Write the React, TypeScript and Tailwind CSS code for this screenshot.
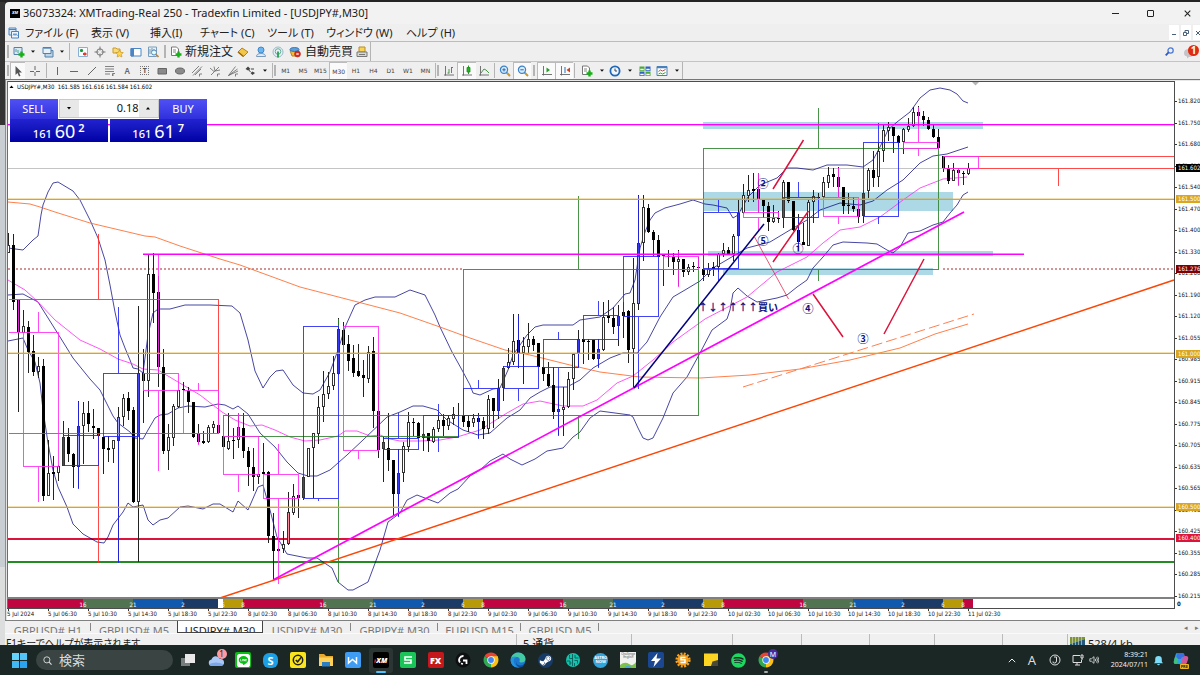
import React from "react";
import { FaLine, FaSpotify, FaSteamSymbol } from "react-icons/fa";

type Kind = "b" | "w" | "u" | "r";
type Candle = [number, number, number, number, Kind];

/* high, body top, body bottom, low, fill */
const candles: Candle[] = [
  [233,245,253,253,"w"],[234,245,302,310,"b"],[300,300,332,412,"b"],[310,326,333,333,"w"],[321,327,352,373,"b"],
  [335,351,372,376,"b"],[357,366,372,378,"w"],[359,366,496,501,"b"],[440,473,496,496,"w"],[456,472,474,500,"b"],
  [465,466,473,481,"w"],[421,437,466,466,"u"],[428,437,454,462,"b"],[453,454,467,488,"b"],[401,426,467,488,"u"],
  [402,413,426,464,"w"],[401,413,424,432,"b"],[409,426,428,439,"b"],[428,428,436,437,"b"],[437,437,449,474,"b"],
  [436,448,450,462,"w"],[440,440,449,463,"w"],[407,417,441,562,"u"],[394,398,417,426,"w"],[392,398,411,420,"b"],
  [407,410,502,503,"b"],[306,373,502,562,"w"],[349,373,381,423,"b"],[254,274,381,397,"w"],[253,274,293,323,"b"],
  [276,292,367,387,"b"],[349,367,451,454,"b"],[424,437,451,470,"w"],[404,406,438,446,"w"],[390,390,407,408,"w"],
  [382,389,390,391,"b"],[387,391,402,413,"b"],[402,402,437,438,"b"],[424,433,442,444,"b"],[431,441,443,444,"b"],
  [425,427,442,443,"w"],[421,424,428,433,"w"],[425,425,433,434,"b"],[436,436,447,447,"b"],[413,441,449,450,"w"],
  [428,440,441,459,"b"],[413,427,440,448,"w"],[413,428,451,458,"b"],[447,451,467,486,"b"],[448,467,477,491,"b"],
  [474,474,477,484,"w"],[443,472,474,474,"w"],[471,472,536,543,"b"],[513,536,551,580,"b"],[548,549,551,552,"w"],
  [531,544,549,553,"w"],[492,512,544,545,"r"],[484,496,513,515,"w"],[495,495,498,518,"b"],[476,477,498,500,"u"],
  [448,448,477,477,"w"],[433,433,448,498,"w"],[396,407,434,444,"w"],[371,394,407,422,"w"],[372,386,394,399,"w"],
  [356,373,386,390,"w"],[318,329,374,375,"u"],[322,330,345,352,"b"],[335,344,361,371,"b"],[345,358,373,377,"b"],
  [344,371,376,377,"b"],[360,375,378,397,"b"],[346,352,379,383,"w"],[337,351,411,428,"b"],[390,411,450,458,"b"],
  [437,442,449,482,"w"],[413,448,460,471,"b"],[460,460,494,516,"b"],[449,473,494,516,"u"],[442,446,473,482,"w"],
  [412,422,447,452,"w"],[418,422,423,436,"b"],[422,423,438,438,"b"],[433,434,438,451,"w"],[433,433,441,452,"b"],
  [427,429,442,443,"w"],[413,420,429,432,"w"],[414,420,426,436,"b"],[415,418,426,430,"w"],[407,414,419,425,"w"],
  [403,415,416,437,"b"],[415,415,422,427,"b"],[416,421,427,432,"b"],[414,418,423,427,"w"],[413,418,422,438,"b"],
  [417,421,429,439,"b"],[395,399,429,434,"w"],[398,398,411,428,"b"],[379,388,411,419,"u"],[366,368,388,401,"w"],
  [348,362,368,369,"w"],[314,341,362,365,"w"],[314,340,353,368,"b"],[337,346,353,384,"w"],[323,339,347,354,"w"],
  [336,339,345,351,"b"],[343,343,367,367,"b"],[367,367,374,381,"b"],[362,374,386,387,"b"],[367,385,412,419,"b"],
  [387,409,412,435,"w"],[387,407,410,436,"w"],[372,379,407,408,"w"],[354,354,379,390,"w"],[330,339,354,367,"u"],
  [339,339,342,364,"b"],[339,341,342,360,"w"],[340,340,359,360,"b"],[339,349,359,367,"u"],[302,317,350,351,"w"],
  [300,316,318,323,"b"],[307,318,327,334,"b"],[305,316,326,346,"u"],[302,312,316,338,"b"],[310,311,350,363,"b"],
  [258,303,349,388,"w"],[195,243,304,310,"u"],[195,207,243,261,"w"],[204,208,232,233,"b"],[230,232,240,256,"b"],
  [235,240,257,257,"b"],[255,255,256,286,"b"],[250,256,257,267,"b"],[253,257,262,275,"b"],[250,259,262,286,"w"],
  [259,259,272,277,"b"],[264,267,272,275,"w"],[262,266,267,272,"w"],[257,267,268,268,"b"],[264,269,275,281,"b"],
  [263,269,275,277,"w"],[262,267,269,276,"w"],[253,254,267,272,"w"],[243,250,254,257,"w"],[247,250,254,255,"b"],
  [234,236,254,261,"w"],[199,213,236,237,"u"],[184,195,213,214,"w"],[175,190,196,202,"w"],[173,189,191,202,"b"],
  [173,189,199,213,"b"],[199,199,206,218,"b"],[202,206,222,231,"b"],[205,218,222,223,"w"],[211,218,219,223,"b"],
  [180,182,218,228,"w"],[182,182,201,203,"b"],[201,201,230,231,"b"],[214,230,242,248,"b"],[223,242,245,245,"b"],
  [200,202,246,246,"w"],[190,196,202,223,"w"],[193,197,198,200,"b"],[177,182,197,198,"w"],[167,175,183,188,"w"],
  [168,174,177,187,"b"],[167,177,187,197,"b"],[187,187,206,214,"b"],[193,205,206,214,"b"],[197,206,209,212,"b"],
  [203,209,217,223,"b"],[190,193,216,223,"u"],[168,170,191,198,"w"],[151,170,178,187,"b"],[142,151,177,187,"w"],
  [125,130,151,162,"w"],[122,127,131,141,"w"],[127,127,136,153,"b"],[135,136,143,147,"b"],[128,129,142,154,"w"],
  [118,126,130,132,"w"],[107,112,126,127,"w"],[106,112,116,126,"b"],[111,116,120,126,"b"],[117,120,129,130,"b"],
  [125,129,137,138,"b"],[129,137,148,149,"b"],[156,156,168,172,"b"],[165,168,181,184,"b"],[163,170,181,181,"w"],
  [168,170,173,185,"b"],[171,173,174,185,"b"],[163,168,174,175,"w"],
];

const BLUE = "#2222f5";
const PINK = "#ff2cf5";
const GREEN = "#2c7f2c";
const RED = "#ff2a2a";

/* left, right, top, bottom, upper wick, lower wick, colour; the wick sits mid-way */
const boxes: [number, number, number, number, number, number, string][] = [
  [23,58,332,466,311,501,PINK],[63,98,435,465,401,488,BLUE],[103,138,373,436,306,562,BLUE],
  [143,178,373,390,254,470,PINK],[183,218,390,433,382,444,PINK],[223,258,436,474,412,491,PINK],
  [263,298,474,498,443,583,PINK],[303,338,326,498,326,500,BLUE],[343,378,326,450,326,458,PINK],
  [383,418,438,449,412,516,BLUE],[423,458,415,437,403,451,BLUE],[463,498,388,415,379,438,BLUE],
  [503,538,366,388,314,400,BLUE],[543,578,339,367,331,435,BLUE],[583,618,315,339,300,367,BLUE],
  [623,658,256,316,195,388,BLUE],[663,698,256,269,250,286,PINK],[703,738,212,268,198,280,BLUE],
  [743,778,212,217,172,231,PINK],[783,818,197,217,181,250,BLUE],[823,858,197,216,167,223,PINK],
  [863,898,142,216,122,223,BLUE],[903,938,142,148,106,155,PINK],[943,978,156,168,156,185,PINK],
];

const upperBand =
  "8,248 23,250 33,240 38,236 41,215 43,205 48,192 53,183 58,182 73,191 80,200 90,220 98,238 105,260 110,285 115,312 120,335 125,348 130,360 133,368 138,369 143,373 148,335 153,313 158,309 170,309 185,305 210,305 232,306 240,313 248,340 255,371 263,388 270,377 276,371 283,370 293,385 303,393 313,394 320,390 330,372 338,350 346,325 355,305 365,300 375,297 395,297 410,290 425,295 435,315 440,327 452,352 462,370 470,385 473,393 480,395 493,389 500,388 508,370 513,355 520,345 527,335 535,327 543,325 573,325 580,320 600,317 613,308 625,294 630,293 635,280 640,248 645,232 650,220 655,213 665,208 680,204 693,200 705,204 713,205 727,208 733,218 738,215 748,197 760,185 777,178 787,168 797,168 813,170 827,165 847,165 863,167 873,160 880,147 888,130 897,122 910,112 920,98 930,90 940,88 950,90 957,94 963,101 968,103";
const middleBand =
  "8,295 23,294 38,302 60,337 73,358 90,379 100,390 113,416 118,423 130,432 135,438 143,439 148,430 155,418 160,415 168,414 178,408 188,406 205,407 218,404 225,405 233,409 238,406 248,414 260,433 275,447 287,462 298,473 308,476 317,476 330,470 347,455 363,440 387,417 400,412 413,406 423,406 437,410 447,420 463,430 478,435 490,433 507,418 520,410 530,398 540,392 550,387 567,387 580,380 593,368 610,358 623,353 637,353 647,342 660,317 673,297 685,290 700,281 713,268 730,258 747,248 770,242 790,230 807,220 820,210 840,203 860,205 873,201 887,190 903,180 920,163 933,156 947,154 968,147";
const lowerBand =
  "8,341 23,338 28,350 35,362 40,383 43,410 48,443 53,470 58,487 67,507 73,524 83,534 97,542 104,543 108,537 113,525 123,512 128,503 133,507 143,505 148,520 153,525 160,520 168,518 180,507 188,506 203,509 213,504 220,504 233,512 238,501 248,510 258,487 263,485 270,510 277,537 287,554 307,558 317,558 332,568 338,582 348,590 353,590 368,582 380,550 388,522 400,513 407,500 417,495 438,503 450,493 458,489 470,476 480,470 490,461 503,454 510,459 522,465 535,459 547,451 563,448 573,437 580,432 590,418 600,411 630,415 633,417 638,428 643,438 648,440 653,438 663,418 673,393 687,377 700,353 712,330 727,319 730,310 733,293 738,288 747,296 757,302 777,298 787,295 797,287 807,280 813,268 823,257 833,245 843,242 867,243 877,244 887,250 893,253 900,247 908,233 920,231 933,225 943,222 950,213 957,205 963,195 968,192";
const pinkAverage =
  "8,280 25,290 38,302 55,320 80,340 100,349 118,359 133,364 143,369 158,370 178,382 200,395 222,412 235,420 250,426 262,425 275,430 290,437 305,441 320,440 338,436 345,431 357,431 370,436 380,435 390,439 400,441 420,441 440,440 457,437 480,430 507,413 523,404 540,401 563,406 583,406 597,400 617,383 633,376 653,360 673,342 705,319 747,297 777,272 807,257 823,243 840,230 860,227 880,217 903,200 920,188 943,179 967,177";
const orangeAverage =
  "8,202 30,204 40,207 55,212 90,223 145,236 155,237 180,246 220,259 240,265 300,287 350,300 400,313 440,327 470,338 505,350 530,355 570,365 600,372 640,377 700,378 750,375 800,369 850,360 900,348 935,334 968,324";

const axisPrices = [
  "161.820","161.750","161.680","161.610","161.540","161.470","161.400","161.330","161.260","161.190","161.120","161.055",
  "160.985","160.915","160.845","160.775","160.705","160.635","160.565","160.495","160.425","160.355","160.285","160.215",
];

const priceTags: [number, string, string][] = [
  [168, "161.602", "#000000"],[199, "161.500", "#daa520"],[269, "161.276", "#800000"],
  [354, "161.000", "#daa520"],[507, "160.500", "#daa520"],[538, "160.400", "#dc143c"],
];

const CR = "#bf0640", GR = "#51734f", BL = "#1159ae", NV = "#1c3a66", GD = "#b89a08";
const sessions: [number, number, string, string][] = [
  [8,83,CR,"16"],[83,133,GR,"21"],[133,183,BL,"2"],[183,218,NV,""],[218,223,"#fff","6"],[223,243,GD,"8"],
  [243,323,CR,"16"],[323,373,GR,"21"],[373,423,BL,"2"],[423,463,NV,"6"],[463,483,GD,"8"],
  [483,563,CR,"16"],[563,613,GR,"21"],[613,663,BL,"2"],[663,703,NV,"6"],[703,723,GD,"8"],
  [723,803,CR,"16"],[803,853,GR,"21"],[853,903,BL,"2"],[903,943,NV,"6"],[943,963,GD,"8"],[963,973,CR,""],
];

const hours = ["02:30", "06:30", "10:30", "14:30", "18:30", "22:30"];
const timeLabels = ["5 Jul 2024", ...hours.slice(1).map((h) => "5 Jul " + h)]
  .concat(...["8", "9", "10"].map((d) => hours.map((h) => d + " Jul " + h)))
  .concat("11 Jul 02:30");

const bodyFill: Record<Kind, string> = { b: "#000", w: "#fff", u: "#a4a8ff", r: "#ff8c9c" };

function Chart() {
  const font = "font-['DejaVu_Sans_Condensed','DejaVu_Sans',sans-serif] text-[6px]";
  return (
    <svg viewBox="5 80 1195 540" className="block h-auto w-full bg-white" role="img" aria-label="USDJPY#,M30">
      <g fill="#add8e6">
        <rect x="703" y="122" width="280" height="7" />
        <rect x="703" y="192" width="250" height="19" />
        <rect x="708" y="251" width="285" height="5" />
        <rect x="723" y="268" width="210" height="7" />
      </g>
      <g shapeRendering="crispEdges" fill="none">
        <path d="M8 168.5H943" stroke="#c4c4c4" />
        <path d="M8 561h1166v2H8z" fill="#228b22" />
        <path d="M8 538h1166v2H8z" fill="#dc143c" />
      </g>
      <path d="M8 269H463M943 269H1174" fill="none" stroke="#a52a2a" strokeDasharray="2 2" />
      <g fill="none" stroke="#000080" strokeOpacity="0.72" strokeLinejoin="round">
        <polyline points={upperBand} />
        <polyline points={middleBand} />
        <polyline points={lowerBand} />
      </g>
      <polyline points={pinkAverage} fill="none" stroke="#ff2cf5" strokeOpacity="0.8" />
      <polyline points={orangeAverage} fill="none" stroke="#ff6a2c" strokeOpacity="0.85" />
      <g shapeRendering="crispEdges">
        {candles.map(([h, t, b, l, k], i) => {
          const x = 8 + i * 5;
          return (
            <g key={i}>
              <rect x={x} y={h} width={1} height={Math.max(l - h, 1)} fill="#222" />
              {b - t < 3 || k === "b" ? (
                <rect x={x - 1} y={t} width={3} height={Math.max(b - t, 1)} fill="#000" />
              ) : (
                <rect x={x - 0.5} y={t + 0.5} width={2} height={b - t - 1} fill={bodyFill[k]} stroke="#333" />
              )}
            </g>
          );
        })}
      </g>
      <g transform="translate(.5 .5)" shapeRendering="crispEdges" fill="none" strokeOpacity="0.85">
        <path d="M8 299H218V433H8M98 233V299M98 433V562M943 156H1174M943 168H1174M1058 168V185" stroke={RED} />
        <path d="M223 436V415H698M223 436H458V415M338 318V326M338 498V582M463 415V269H698V415M578 195V269M578 415V438M703 148H938V269H703zM818 107V148M818 269V280" stroke={GREEN} />
        <path d="M8 299H18V332M8 332H23" stroke={PINK} />
        {boxes.map(([x1, x2, y1, y2, h, l, c], i) => {
          const mid = x1 + 15;
          return <path key={i} d={`M${x1} ${y1}H${x2}V${y2}H${x1}zM${mid} ${h}V${y1}M${mid} ${y2}V${l}`} stroke={c} />;
        })}
      </g>
      <g shapeRendering="crispEdges">
        {[199, 353, 507].map((y) => (
          <g key={y}>
            <rect x="8" y={y} width="1166" height="1" fill="#daa520" />
            <rect x="8" y={y - 1} width="1166" height="1" fill="#daa520" opacity="0.35" />
          </g>
        ))}
        <rect x="8" y="124" width="1166" height="1" fill="#ff00ff" />
        <rect x="8" y="125" width="1166" height="1" fill="#ff00ff" opacity="0.35" />
        <rect x="143" y="254" width="881" height="1" fill="#ff00ff" />
        <rect x="143" y="253" width="881" height="1" fill="#ff00ff" opacity="0.5" />
      </g>
      <g fill="none" strokeWidth="1.5">
        <path d="M220 598L1174 280" stroke="#ff4500" />
        <path d="M273 580L964 212" stroke="#ff00ff" strokeWidth="1.7" />
        <path d="M634 388L764 224" stroke="#000080" />
        <path d="M773 189L803.500 140M773 262L808.500 211M813 294L843 337M884 334L924 259" stroke="#dc143c" />
        <path d="M754 236L788.500 299" stroke="#dc143c" strokeWidth="1" strokeOpacity="0.7" />
        <path d="M743 387L974 314" stroke="#ff7f50" strokeWidth="1" strokeDasharray="11 4" />
      </g>
      <g className="font-['Noto_Sans_CJK_JP',sans-serif] text-[11px] font-bold" fill="#101080" textAnchor="middle">
        <text x="763" y="188">②</text>
        <text x="763" y="245">⑤</text>
        <text x="798" y="253">①</text>
        <text x="808" y="313">④</text>
        <text x="863" y="343">③</text>
        <text x="768" y="311" className="text-[10px]">買い</text>
        {"↑↓↑↑↑↑".split("").map((a, i) => (
          <text key={i} x={703 + i * 10} y="311" className="text-[10px]">{a}</text>
        ))}
      </g>
      <path d="M972 82h7l-3.500 3.500z" fill="#b5b5b5" />

      {/* frame */}
      <g shapeRendering="crispEdges">
        <rect x="5" y="80" width="1195" height="1" fill="#e8e8e8" />
        <rect x="7" y="81" width="1168" height="1" fill="#4d4d4d" />
        <rect x="5" y="80" width="1" height="540" fill="#8d8d8d" />
        <rect x="6" y="81" width="1" height="539" fill="#e3e3e3" />
        <rect x="7" y="81" width="1" height="528" fill="#6d6d6d" />
        <rect x="7" y="597" width="1168" height="2" fill="#808080" />
        <rect x="1174" y="81" width="1" height="528" fill="#4d4d4d" />
        {sessions.map(([a, b, c]) => (
          <rect key={a} x={a} y="599" width={b - a} height="9" fill={c} />
        ))}
        <rect x="7" y="608" width="1168" height="1" fill="#4d4d4d" />
        {axisPrices.map((p, i) => (
          <rect key={p} x="1175" y={Math.round(101 + i * 21.52)} width="2" height="1" fill="#333" />
        ))}
        {timeLabels.map((t, i) => (
          <rect key={t} x={8 + i * 40} y="609" width="1" height="2" fill="#333" />
        ))}
      </g>
      <g className={font} fill="#111">
        {axisPrices.map((p, i) => (
          <text key={p} x="1178" y={Math.round(103 + i * 21.52)}>{p}</text>
        ))}
        {timeLabels.map((t, i) => (
          <text key={t} x={(i ? 8 : 7) + i * 40} y="616">{t}</text>
        ))}
        <text x="1177" y="606" className="font-bold">0</text>
      </g>
      <g className={font} fill="#fff">
        {priceTags.map(([y, p, c]) => (
          <g key={p}>
            <rect x="1176" y={y - 4} width="24" height="8" fill={c} shapeRendering="crispEdges" />
            <text x="1178" y={y + 2}>{p}</text>
          </g>
        ))}
        {sessions.map(([a, b, , n]) => (
          <text key={a} x={b} y="607" textAnchor="middle">{n}</text>
        ))}
      </g>
    </svg>
  );
}

const cell = "flex h-full min-w-0 flex-1 items-center justify-center";
const pressed = "flex h-full min-w-0 flex-1 items-center justify-center border-l border-t border-[#bbb] bg-[#fafafa]";

function Grip({ className }: { className: string }) {
  return (
    <span className={"flex h-full shrink-0 justify-center py-[3px] " + className}>
      <span className="w-[2px] border-x border-[#b4b4b4]" />
    </span>
  );
}
function Sep({ className }: { className: string }) {
  return (
    <span className={"flex h-full shrink-0 justify-center py-px " + className}>
      <span className="w-px bg-[#b4b4b4]" />
    </span>
  );
}
function Drop({ className, label }: { className: string; label: string }) {
  return (
    <button aria-label={label} className={"flex h-full shrink-0 items-center justify-center " + className}>
      <svg viewBox="0 0 4 3" className="h-[3px] w-[4px]"><path d="M0 0.500h4L2 2.800z" fill="#111" /></svg>
    </button>
  );
}
function Ico({ children }: { children: React.ReactNode }) {
  return (
    <svg viewBox="0 0 12 12" className="size-[12px] shrink-0" fill="none" stroke="#666" aria-hidden="true">
      {children}
    </svg>
  );
}
function Tool({ label, on, children }: { label: string; on?: boolean; children: React.ReactNode }) {
  return <button aria-label={label} className={on ? pressed : cell}><Ico>{children}</Ico></button>;
}

const greenPlus = <path d="M8.500 5.500v6M5.500 8.500h6" stroke="#18b018" strokeWidth="2.400" />;
const docPlus = (
  <>
    <path d="M1.500 1h5l2 2v6.500h-7z" fill="#fff" stroke="#777" />
    <path d="M3 4h3M3 6h3" stroke="#888" />
    {greenPlus}
  </>
);

function MainToolbar() {
  return (
    <div className="flex h-[20px] items-center border-b border-[#c4c4c4] bg-[#efefef]">
      <Grip className="w-[5px]" />
      <div className="flex h-full w-[18px]">
        <Tool label="New chart"><path d="M1 1.500h8v7H1z" fill="#d9e8f6" stroke="#5580a8" /><path d="M3 6V3M5 7V4" stroke="#4a8" />{greenPlus}</Tool>
      </div>
      <Drop className="w-[9px]" label="New chart menu" />
      <div className="flex h-full w-[22px]">
        <Tool label="Profiles"><path d="M3 4.500h8v6.500H3z" fill="#bcd4ea" stroke="#5580a8" /><path d="M1 1.500h8v6H1z" fill="#e8f1fa" stroke="#5580a8" /><path d="M1 2.500h8" stroke="#7ea6cc" /></Tool>
      </div>
      <Drop className="w-[6px]" label="Profiles menu" />
      <Sep className="w-[9px]" />
      <div className="flex h-full w-[88px]">
        <Tool label="Market watch"><path d="M1.500 1.500h9v9h-9z" fill="#f7fbff" stroke="#8ab0d4" /><path d="M3 4.500h3M4.500 3v3" stroke="#1c9a3a" strokeWidth="1.800" /><path d="M6 8h3.500M7.800 6.500v3" stroke="#e43a2a" strokeWidth="1.800" /></Tool>
        <Tool label="Data window"><circle cx="6" cy="6" r="3.200" stroke="#777" /><path d="M6 .5v4M6 7.500v4M.5 6h4M7.500 6h4" stroke="#777" /></Tool>
        <Tool label="Navigator"><path d="M1 2h3l1 1h3v4H1z" fill="#f8dc7a" stroke="#c99a2a" /><path d="M7.500 4l1.200 2.300 2.500.3-1.800 1.800.5 2.600-2.400-1.200L5.200 11l.4-2.600-1.800-1.800 2.500-.3z" fill="#ffd94a" stroke="#c8932a" strokeWidth=".7" /></Tool>
        <Tool label="Terminal"><path d="M1 2.500h10v7.500H1z" fill="#fff" stroke="#4a86c4" /><path d="M1 2.500h2.500V10H1z" fill="#4a86c4" stroke="#4a86c4" /></Tool>
        <Tool label="Strategy tester"><path d="M1.500 1h8v9.500h-8z" fill="#e6eef7" stroke="#7a9cbc" /><path d="M3 3v5M5 2v4M7 3v4" stroke="#79a" /><circle cx="7" cy="6.500" r="2.500" stroke="#5a8ab8" fill="#dff" /><path d="M9 8.500l2.500 2.500" stroke="#b8863a" strokeWidth="1.600" /></Tool>
      </div>
      <Grip className="w-[6px]" />
      <button className="flex h-full w-[66px] items-center gap-[3px] pl-[2px] text-[12px] text-[#222]">
        <Ico>{docPlus}</Ico>
        <span className="whitespace-nowrap leading-none">新規注文</span>
      </button>
      <div className="flex h-full w-[53px]">
        <Tool label="MetaEditor"><path d="M1 6l4-4 6 4-4.500 4.500z" fill="#f3c64a" stroke="#b8831a" /><path d="M1 6l5.500 4.500" stroke="#996a10" strokeWidth="1.600" /></Tool>
        <Tool label="Virtual hosting"><circle cx="6" cy="4" r="3" fill="#6cb6f0" stroke="#3d88cc" /><path d="M1.500 10.500q0-3 4.500-3t4.500 3z" fill="#dfeaf5" stroke="#7799bb" /></Tool>
        <Tool label="Signals"><circle cx="6" cy="6" r="5" stroke="#9ab8c8" fill="#e6f1f4" /><circle cx="6" cy="5.500" r="2.800" stroke="#6a9" /><path d="M6 5.500v6" stroke="#2aa050" strokeWidth="1.800" /></Tool>
      </div>
      <button className="flex h-full w-[67px] items-center gap-[4px] pl-[2px] text-[12px] text-[#222]">
        <Ico><path d="M1 4.500h9L8 10H3z" fill="#f1bd3a" stroke="#b98420" /><ellipse cx="5.500" cy="3.500" rx="4.500" ry="2" fill="#5ba0dc" stroke="#3a78b4" /><circle cx="8.500" cy="8" r="3" fill="#e02a1c" stroke="#b41a10" strokeWidth=".5" /><path d="M7.300 8h2.400" stroke="#fff" strokeWidth="1.600" /></Ico>
        <span className="whitespace-nowrap leading-none">自動売買</span>
      </button>
      <div className="flex h-full w-[17px] border-r border-[#b4b4b4]">
        <Tool label="Print"><path d="M3 1h6v5H3z" fill="#f8d35a" stroke="#b98c24" /><path d="M1 6h10v4.500H1z" fill="#d8d8d0" stroke="#777" /><path d="M3 8.500h6" stroke="#777" /></Tool>
      </div>
      <div className="ml-auto flex h-full items-center gap-[10px] pr-px">
        <button aria-label="Search">
          <svg viewBox="0 0 10 10" className="size-[9px]" fill="none"><circle cx="6.200" cy="3.800" r="2.900" stroke="#4a78d8" strokeWidth="1.400" /><path d="M4 6L.8 9.200" stroke="#2a58c8" strokeWidth="2" /></svg>
        </button>
        <button aria-label="Notifications" className="relative h-[14px] w-[15px]">
          <svg viewBox="0 0 15 14" className="h-[14px] w-[15px]"><path d="M0 8q0-4 5-4t5 4-5 4l-2 1.500V11.500Q0 11 0 8z" fill="#c4c4c8" /></svg>
          <span className="absolute right-0 top-0 flex size-[11px] items-center justify-center rounded-full bg-[#dd2c12] text-[10px] font-bold leading-none text-white">1</span>
        </button>
      </div>
    </div>
  );
}

function DrawingToolbar() {
  return (
    <div className="flex h-[18px] items-center border-b border-[#777] bg-[#efefef]">
      <Grip className="w-[5px]" />
      <div className="flex h-full w-[15px]">
        <Tool label="Cursor" on><path d="M3.500 1v9l2-2 1.500 3.500 1.500-.7L7 7.500h3z" fill="#555" stroke="none" /></Tool>
      </div>
      <div className="flex h-full w-[20px]">
        <Tool label="Crosshair"><path d="M6 1v4M6 7v4M1 6.500h4M7 6.500h4" /></Tool>
      </div>
      <Sep className="w-[3px]" />
      <div className="flex h-full w-[211px]">
        <Tool label="Vertical line"><path d="M6.500 2v8" /></Tool>
        <Tool label="Horizontal line"><path d="M2 6.500h8" /></Tool>
        <Tool label="Trendline"><path d="M2 10l8-8" /></Tool>
        <Tool label="Fibonacci"><path d="M1 1.500h9M1 4h9M1 6.500h9M1 9h5M8.500 11V8.500h2.500M8.500 10H10" strokeWidth=".8" /></Tool>
        <button className={cell + " text-[8px] font-semibold text-[#666]"}>A</button>
        <button aria-label="Text label" className={cell}>
          <span className="flex size-[9px] items-center justify-center border border-dotted border-[#777] text-[7px] font-bold leading-none text-[#555]">T</span>
        </button>
        <Tool label="Rectangle"><path d="M2 3.500h8.500v5.500H2z" fill="#8a8a8a" stroke="#666" /></Tool>
        <Tool label="Ellipse"><ellipse cx="6" cy="6" rx="4.500" ry="3" fill="#8a8a8a" stroke="#666" /></Tool>
        <Tool label="Channel"><path d="M1 8l7-7M2 10.500l9-9M4 10l6-6M8.500 11.500V9h2.500" strokeWidth=".8" /></Tool>
        <Tool label="Pitchfork"><path d="M2 10l8-8M1 3l4 3.500M5 1.500l1 4.500M6 6l5-1M8.500 11.500V9h2.500" strokeWidth=".8" /></Tool>
        <Tool label="Fan"><path d="M1.500 10.500l7-9M1.500 10.500l9-6.500M1.500 10.500L11 6M8.500 11.500V9h2.500" strokeWidth=".8" /></Tool>
        <Tool label="Arrows"><path d="M4 1.500L6.500 4 4 5.500 1.500 4z" fill="#444" stroke="none" /><path d="M4 4l2.500 3M7 4h3" stroke="#444" /><path d="M8.500 6.500L11 8l-2.500 2L6.500 8z" fill="#444" stroke="none" /></Tool>
      </div>
      <Drop className="w-[12px]" label="Arrows menu" />
      <Sep className="w-[2px]" />
      <Grip className="w-[4px]" />
      <div className="flex h-full w-[157px] font-['DejaVu_Sans',sans-serif] text-[6px] text-[#444]">
        {["M1", "M5", "M15", "M30", "H1", "H4", "D1", "W1", "MN"].map((t) => (
          <button key={t} className={t === "M30" ? pressed : cell}>{t}</button>
        ))}
      </div>
      <Sep className="w-[2px]" />
      <Grip className="w-[4px]" />
      <div className="flex h-full w-[53px]">
        <Tool label="Bar chart"><path d="M2.500 1v9.500M1 10h10" stroke="#666" strokeWidth=".9" /><path d="M6 8.500V4M8.500 2v6M8.500 2.500h1.500M4.500 8H6" stroke="#388a38" strokeWidth=".9" /></Tool>
        <Tool label="Candlesticks" on><path d="M2.500 1v9.500M1 10h10" stroke="#666" strokeWidth=".9" /><path d="M7.500 .5v8.500" stroke="#2a9a2a" /><path d="M6 2.500h3v4.500H6z" fill="#22b422" stroke="#1c8a1c" strokeWidth=".8" /></Tool>
        <Tool label="Line chart"><path d="M2.500 1v9.500M1 10h10" stroke="#666" strokeWidth=".9" /><path d="M3 8l3-4 2 1 3 3" stroke="#388a38" strokeWidth=".9" /></Tool>
      </div>
      <Sep className="w-[3px]" />
      <div className="flex h-full w-[35px]">
        <Tool label="Zoom in"><path d="M7.500 7.500l3.500 3.500" stroke="#c9982a" strokeWidth="2" /><circle cx="5" cy="4.800" r="3.600" fill="#d8ecfb" stroke="#3b82c8" strokeWidth="1.200" /><path d="M3.300 4.800h3.400M5 3.100v3.400" stroke="#2a68b8" /></Tool>
        <Tool label="Zoom out" on><path d="M7.500 7.500l3.500 3.500" stroke="#c9982a" strokeWidth="2" /><circle cx="5" cy="4.800" r="3.600" fill="#d8ecfb" stroke="#3b82c8" strokeWidth="1.200" /><path d="M3.300 4.800h3.400" stroke="#2a68b8" /></Tool>
      </div>
      <Grip className="w-[6px]" />
      <div className="flex h-full w-[36px]">
        <Tool label="Auto scroll" on><path d="M2.500 1v9.500M1 9.500h10" stroke="#666" strokeWidth=".9" /><path d="M5.500 2.500l3.500 2.500-3.500 2.500z" fill="#22a022" stroke="none" /></Tool>
        <Tool label="Chart shift" on><path d="M2.500 1v9.500M1 9.500h10" stroke="#666" strokeWidth=".9" /><path d="M6 2v6" stroke="#2a70b8" /><path d="M11 2.500L7.500 5 11 7.500z" fill="#d0401c" stroke="none" /></Tool>
      </div>
      <Sep className="w-[3px]" />
      <div className="flex h-full w-[22px]"><Tool label="Indicators">{docPlus}</Tool></div>
      <Drop className="w-[8px]" label="Indicators menu" />
      <div className="flex h-full w-[18px]">
        <Tool label="Periods"><circle cx="6" cy="6" r="4.600" fill="#eef6ff" stroke="#1f68b8" strokeWidth="1.800" /><path d="M6 3.500V6h2" stroke="#444" /></Tool>
      </div>
      <Drop className="w-[12px]" label="Periods menu" />
      <div className="flex h-full w-[35px]">
        <Tool label="Tile windows"><path d="M.5 1.500h5V6h-5zM6.500 6.500h5V11h-5z" fill="#4aa83a" stroke="none" /><path d="M6.500 1.500h5V6h-5zM.5 6.500h5V11h-5z" fill="#2e62c0" stroke="none" /><path d="M1.300 4.500h3.400M7.300 4.500h3.400M1.300 9.500h3.400M7.300 9.500h3.400" stroke="#fff" strokeWidth="1.400" /></Tool>
        <Tool label="Templates"><path d="M1 1.500h10v9H1z" fill="#fff" stroke="#4a80b8" /><path d="M1 2.500h10" stroke="#4a80b8" strokeWidth="1.500" /><path d="M2.500 6.500l2-1.500 2 1 3-1.500" stroke="#c44" /><path d="M2.500 9l2-1 2 1 3-1.500" stroke="#3a3" /></Tool>
      </div>
      <Drop className="w-[12px] border-r border-[#b4b4b4]" label="Templates menu" />
    </div>
  );
}

function TradePanel() {
  const top = "flex h-[20px] w-[48px] items-center justify-center bg-linear-to-b from-[#5050f4] to-[#3030dc] text-[11px] text-white";
  const price = "flex h-[23px] flex-1 items-center justify-center gap-[3px] bg-linear-to-b from-[#2222d0] to-[#0000a4] text-white";
  const spin = "flex w-[19px] items-center justify-center bg-[#e8e8e8]";
  return (
    <div className="absolute left-[5px] top-[19px] w-[197px]">
      <div className="flex justify-between">
        <button className={top}>SELL</button>
        <div className="flex h-[19px] w-[100px] border border-[#c8c8c8] bg-white">
          <button aria-label="Decrease volume" className={spin}><svg viewBox="0 0 4 3" className="h-[3px] w-[4px]"><path d="M0 0h4L2 2.500z" /></svg></button>
          <input aria-label="Volume" defaultValue="0.18" className="min-w-0 flex-1 bg-white text-right text-[11px] text-[#111] outline-none" />
          <button aria-label="Increase volume" className={spin}><svg viewBox="0 0 4 3" className="h-[3px] w-[4px]"><path d="M0 2.500h4L2 0z" /></svg></button>
        </div>
        <button className={top}>BUY</button>
      </div>
      <div className="flex gap-[2px]">
        <button aria-label="Sell 161.602" className={price}>
          <span className="pt-[5px] text-[11px] font-medium leading-none">161</span>
          <span className="text-[18px] leading-none">60</span>
          <span className="pb-[7px] text-[11px] font-semibold leading-none">2</span>
        </button>
        <button aria-label="Buy 161.617" className={price}>
          <span className="pt-[5px] text-[11px] font-medium leading-none">161</span>
          <span className="text-[18px] leading-none">61</span>
          <span className="pb-[7px] text-[11px] font-semibold leading-none">7</span>
        </button>
      </div>
    </div>
  );
}

function Chrome() {
  return (
    <svg viewBox="0 0 16 16" className="size-[16px]">
      <path d="M8 8L1.500 4.300A7.500 7.500 0 0 1 14.500 4.300z" fill="#e94335" />
      <path d="M8 8l6.500-3.700A7.500 7.500 0 0 1 8 15.500z" fill="#fbc116" />
      <path d="M8 8v7.500A7.500 7.500 0 0 1 1.500 4.300z" fill="#31a952" />
      <path d="M8 4.300h6.500a7.500 7.500 0 0 1 .5 1.200L11 10z" fill="#fbc116" />
      <circle cx="8" cy="8" r="3.700" fill="#fff" />
      <circle cx="8" cy="8" r="2.900" fill="#4285f4" />
    </svg>
  );
}

const tile = "flex size-[16px] items-center justify-center rounded-[2px] leading-none";

const apps: { name: string; icon: React.ReactNode; active?: boolean; mark?: boolean }[] = [
  { name: "Task view", icon: <svg viewBox="0 0 16 16" className="size-[16px]"><path d="M1 6h9v8H1z" fill="#777c7c" /><path d="M5 2h10v9H5z" fill="#e8e8e8" /></svg> },
  { name: "Weather", icon: (
    <span className="relative"><svg viewBox="0 0 16 16" className="size-[16px]"><path d="M3.500 14a3.300 3.300 0 0 1 0-6.500A4.500 4.500 0 0 1 12 7a3.500 3.500 0 0 1 1 7z" fill="#a9c8f5" /><path d="M1 12q7-3 14 0-.5 2-2 2h-9.500Q1.500 14 1 12z" fill="#7ba6ea" /></svg>
    <span className="absolute -right-[3px] -top-[3px] flex size-[10px] items-center justify-center rounded-full bg-[#ff9aa5] text-[8px] leading-none text-[#222]">1</span></span>) },
  { name: "LINE", icon: <span className={tile + " bg-[#06c011]"}><FaLine className="size-[15px] text-white" /></span> },
  { name: "Skype", icon: <span className="flex size-[15px] items-center justify-center rounded-[6px] bg-[#1c9fe4] text-[11px] font-bold leading-none text-white">S</span> },
  { name: "Norton", icon: <span className={tile + " bg-[#fbe51c]"}><svg viewBox="0 0 12 12" className="size-[12px]" fill="none" stroke="#222" strokeWidth="1.500"><circle cx="6" cy="6" r="4.700" /><path d="M3.800 6l1.800 1.800L9.500 3" /></svg></span> },
  { name: "Explorer", icon: <svg viewBox="0 0 16 16" className="size-[16px]"><path d="M1 2h5l2 2h7v10H1z" fill="#e8a82a" /><path d="M1 5.500h14V14H1z" fill="#ffd257" /><path d="M4 10h8v4.500H4z" fill="#2d7fc4" /></svg> },
  { name: "WPS", icon: <span className={tile + " bg-[#3f9cf3]"}><svg viewBox="0 0 12 12" className="size-[12px]" fill="none" stroke="#fff" strokeWidth="1.500"><path d="M1.500 3v6l4-3.500L9.500 9V3" /></svg></span> },
  { name: "XM", active: true, icon: <span className={tile + " bg-black text-[7px] font-black italic text-white"}><span className="text-[#e22]">›</span>XM</span> },
  { name: "S", icon: <span className={tile + " bg-[#1bc458]"}><svg viewBox="0 0 12 12" className="size-[12px]" fill="none" stroke="#fff" strokeWidth="1.600"><path d="M10 3H3v3h6v3H2" /></svg></span> },
  { name: "FX", icon: <span className={tile + " bg-[#c4181c] text-[9px] font-black text-white"}>FX</span> },
  { name: "Logicool G", icon: <svg viewBox="0 0 16 16" className="size-[16px]"><circle cx="8" cy="8" r="7.500" fill="#0d0f10" /><path d="M8.500 4A4 4 0 0 0 5 10.500M8 8.500h3.500V12M6 11.500l2 .5" fill="none" stroke="#fff" strokeWidth="1.800" /></svg> },
  { name: "Chrome", icon: <Chrome /> },
  { name: "Edge", icon: <svg viewBox="0 0 16 16" className="size-[16px]"><circle cx="8" cy="8" r="7.500" fill="#1c77cf" /><path d="M1 6Q3 .5 8.500.5c4 0 7 3 7 6.500 0 2.500-2 3.500-4 3.500-1.500 0-2.500-.6-2-1.500 1-2-.5-4-3-4Q3 5 1 6z" fill="#45c8a4" /><path d="M1 6q3-2.500 5.500-1c-3 1-3.500 4.500-2 7 1 2 3 3.300 5 3.300C4 16.500-.5 12 1 6z" fill="#2494dd" /><path d="M6 9q0 4 4 4.500 2.500 0 4.500-1.500Q13 15.500 9.500 15.500 5.500 14 6 9z" fill="#0c4f9c" /></svg> },
  { name: "Steam", icon: <span className="flex size-[15px] items-center justify-center rounded-full bg-[#173b66]"><FaSteamSymbol className="size-[13px] text-white" /></span> },
  { name: "Brain", icon: <svg viewBox="0 0 16 16" className="size-[16px]"><circle cx="8" cy="8" r="7" fill="#15c2ac" /><path d="M7.500 2v12M4.500 3v3.500h3M2 9h3v4M10 3v3h3.500M9.500 8.500h3v3M9.500 11v3M4.500 11h2" fill="none" stroke="#0b4f52" strokeWidth=".8" /></svg> },
  { name: "Astro Now", icon: <span className="flex size-[15px] flex-col items-center justify-center rounded-full bg-[#31a5dc] text-[4px] font-bold leading-none text-white"><span>ASTRO</span><span>NOW</span></span> },
  { name: "Challenge English", icon: <span className="flex size-[16px] flex-col bg-[#f2f2ee] pt-px text-center text-[3px] leading-none text-[#555]"><span>Challenge</span><span>English</span><svg viewBox="0 0 16 8" className="mt-auto h-[8px] w-[16px]"><path d="M0 8V5q5-4 9-1t7-2v6z" fill="#7cc14a" /><path d="M4 8q4-5 8 0z" fill="#4aa6d8" /></svg></span> },
  { name: "Bolt", icon: <span className={tile + " bg-[#1b4790]"}><svg viewBox="0 0 12 14" className="h-[14px] w-[12px]"><path d="M7.500 0L1 8h4L3.500 14 11 5.500H6.500z" fill="#fff" /></svg></span> },
  { name: "Sun", icon: <svg viewBox="0 0 16 16" className="size-[16px]"><circle cx="8" cy="8" r="6.400" fill="none" stroke="#f5a020" strokeWidth="2.400" strokeDasharray="2 1.350" /><circle cx="8" cy="8" r="5.600" fill="#f5a020" /><path d="M10.500 5.500H6v2.300h4v2.700H5.500" fill="none" stroke="#fff" strokeWidth="1.500" /></svg> },
  { name: "Sticky notes", icon: <svg viewBox="0 0 16 16" className="size-[16px]"><path d="M1 1.500h14V14H1z" fill="#fcd522" /><path d="M15 8v6H8l1.500-4.500z" fill="#4b4a38" /></svg> },
  { name: "Spotify", icon: <FaSpotify className="size-[15px] text-[#1ed760]" /> },
  { name: "Chrome profile", mark: true, icon: <span className="relative"><Chrome /><span className="absolute -right-[4px] -top-[3px] flex size-[10px] items-center justify-center rounded-full bg-[#4a2a9c] text-[7px] leading-none text-white">M</span></span> },
];

function Taskbar() {
  return (
    <footer className="flex h-[30px] items-center bg-[#1b2725] text-white">
      <button aria-label="Start" className="ml-[12px] grid size-[15px] grid-cols-2 gap-px">
        <span className="bg-[#63d4fb]" /><span className="bg-[#52c6f8]" /><span className="bg-[#3fb8f4]" /><span className="bg-[#2aa4ee]" />
      </button>
      <label className="ml-[9px] flex h-[20px] w-[137px] items-center gap-[7px] rounded-full bg-[#3a4443] pl-[7px]">
        <svg viewBox="0 0 10 10" className="size-[9px] shrink-0" fill="none" stroke="#ddd"><circle cx="4.300" cy="4.300" r="3.400" /><path d="M6.800 6.800l2.700 2.700" strokeWidth="1.300" /></svg>
        <input aria-label="検索" placeholder="検索" className="w-full min-w-0 bg-transparent text-[13px] leading-none outline-none placeholder:text-[#d8dcdb]" />
      </label>
      <nav className="ml-[3px] flex w-[602px] shrink-0 items-center justify-between">
        {apps.map((a) => (
          <button key={a.name} aria-label={a.name} className={a.active ? "relative flex h-[25px] w-[24px] items-center justify-center rounded-[3px] bg-[#2a3534]" : "relative flex h-[25px] w-[24px] items-center justify-center"}>
            {a.icon}
            {a.active && <span className="absolute bottom-0 h-[2px] w-[10px] rounded bg-[#4cc2ff]" />}
            {a.mark && <span className="absolute bottom-0 h-[2px] w-[4px] rounded bg-[#a8adac]" />}
          </button>
        ))}
      </nav>
      <div className="ml-auto flex items-center pr-[11px]">
        <button aria-label="Hidden icons" className="w-[20px]"><svg viewBox="0 0 8 5" className="mx-auto h-[5px] w-[8px]" fill="none" stroke="#eee"><path d="M.8 4.200L4 1l3.200 3.200" /></svg></button>
        <button className="w-[20px] text-[13px] leading-none text-[#ddd]">A</button>
        <button aria-label="Input mode" className="flex w-[26px] justify-center"><svg viewBox="0 0 12 12" className="size-[12px]" fill="none" stroke="#ddd"><circle cx="6" cy="6" r="5" /><path d="M7.500 3v4q0 2-2 2T4 7.500M5 3h2.500" /></svg></button>
        <button aria-label="Network" className="flex w-[20px] justify-center"><svg viewBox="0 0 12 12" className="size-[12px]" fill="none" stroke="#ddd"><path d="M8 1.500H1v7h8.500V6M3 11h5M5 8.500V11" /><path d="M9 1h2v3H9zM10 4v2" /></svg></button>
        <button aria-label="Volume" className="flex w-[11px] justify-center"><svg viewBox="0 0 12 12" className="size-[10px]" fill="none" stroke="#ddd"><path d="M1 4.500h2L6 2v8L3 7.500H1zM7.500 4.500q1 1.500 0 3M9 3q2.300 3 0 6M10.500 2q3 4 0 8" /></svg></button>
        <button className="ml-[10px] w-[39px] whitespace-nowrap text-right text-[7px] leading-[10px] text-[#f0f0f0]">8:39:21<br />2024/07/11</button>
        <button aria-label="Notifications" className="flex w-[20px] justify-center"><svg viewBox="0 0 12 12" className="size-[11px]" fill="#7fdcf8"><path d="M6 1a3.600 3.600 0 0 1 3.600 3.600V7l1.200 2H1.200l1.200-2V4.600A3.600 3.600 0 0 1 6 1zM4.500 9.700h3Q7.300 11.200 6 11.200T4.500 9.700z" /></svg></button>
        <button aria-label="Copilot" className="relative ml-[5px] h-[16px] w-[16px]">
          <svg viewBox="0 0 16 16" className="size-[16px]"><path d="M4 1h5q2 0 2.500 2L9 12H3Q0 12 1 8.500L2.500 3Q3 1 4 1z" fill="#29a7e0" /><path d="M10 4h3q3 0 2 3.500l-1 3Q13 13 11 13H6q2 0 2.500-2z" fill="#d0569a" /><path d="M4 1h5q2 0 2.500 2L11 5Q9 4 8 7L3 7z" fill="#3b6fe0" /><path d="M1 8.500L2 5q3 0 3 3T3 12Q0 12 1 8.500z" fill="#3fc07c" /></svg>
          <span className="absolute -bottom-px right-0 h-[5px] rounded-[1px] bg-[#f0b91c] px-px text-[4px] font-bold leading-[5px] text-[#222]">PRE</span>
        </button>
      </div>
    </footer>
  );
}

const tabs: [string, string][] = [
  ["GBPUSD# H1", "w-[86px]"],["GBPUSD# M5", "w-[86px]"],["USDJPY# M30", "w-[86px]"],["USDJPY# M30", "w-[88px]"],
  ["GBPJPY# M30", "w-[87px]"],["EURUSD M15", "w-[83px]"],["GBPUSD M5", "w-[78px]"],
];

export default function App() {
  return (
    <div className="flex min-h-screen flex-col bg-[#242424] font-['Noto_Sans','Noto_Sans_CJK_JP',sans-serif]">
      <div className="flex pt-[2px]">
        <div className="flex w-[5px] shrink-0 flex-col">
          <span className="h-[123px] bg-[#343434]" />
          <span className="flex-1 bg-[#c9ced2]" />
          <span className="h-[78px] bg-[#dcdedd]" />
        </div>
        <div className="min-w-0 flex-1 overflow-hidden rounded-tl-[4px] bg-[#f2f2f2]">
          <header className="flex h-[22px] items-center gap-[3px] pl-[5px] text-[11px] text-[#1a1a1a]">
            <span className="flex h-[9px] w-[10px] items-center justify-center bg-black text-[4px] font-bold italic leading-none text-white">XM</span>
            <h1 className="whitespace-nowrap">36073324: XMTrading-Real 250 - Tradexfin Limited - [USDJPY#,M30]</h1>
            <div className="ml-auto flex h-full">
              <button aria-label="Minimize" className="flex w-[35px] items-center justify-center"><span className="h-px w-[7px] bg-[#222]" /></button>
              <button aria-label="Maximize" className="flex w-[35px] items-center justify-center"><span className="size-[7px] rounded-[1px] border border-[#222]" /></button>
              <button aria-label="Close" className="flex w-[32px] items-center justify-center pl-[6px]"><svg viewBox="0 0 8 8" className="size-[7px]" stroke="#222" strokeWidth="1.200"><path d="M.8.8l6.400 6.400M7.200.8L.8 7.200" /></svg></button>
            </div>
          </header>
          <div className="flex h-[18px] items-center border-b border-[#bcbcbc] bg-[#efefef] pl-[3px]">
            <svg viewBox="0 0 12 12" className="size-[12px]" fill="#dceaf8" stroke="#4a80c0"><path d="M1 1h7v7H1z" /><path d="M1 2.500h7" /><path d="M3.500 4.500h7V11h-7z" fill="#eef5fc" /><path d="M5 8.500l1-2 1 2 1-2 1.500 2.500" fill="none" strokeWidth=".8" /></svg>
            <nav className="ml-[5px] grid grid-cols-[66px_59px_50px_67px_59px_80px_60px] text-[11px] leading-none text-[#222] [font-feature-settings:'palt']">
              {["ファイル (F)", "表示 (V)", "挿入(I)", "チャート (C)", "ツール (T)", "ウィンドウ (W)", "ヘルプ (H)"].map((m) => (
                <button key={m} className="whitespace-nowrap text-left">{m}</button>
              ))}
            </nav>
            <div className="ml-auto flex gap-[2px] text-[#4a6078]">
              <button aria-label="Minimize chart" className="flex h-[15px] w-[10px] items-end justify-center bg-white pb-[5px]"><span className="h-px w-[4px] bg-current" /></button>
              <button aria-label="Restore chart" className="flex h-[15px] w-[10px] items-center justify-center bg-white"><svg viewBox="0 0 6 6" className="size-[6px]" fill="none" stroke="currentColor"><path d="M.5 2.500h3v3h-3zM2 2.500V.5h3.500v3h-2" /></svg></button>
              <button aria-label="Close chart" className="flex h-[15px] w-[7px] items-center justify-end bg-white"><svg viewBox="0 0 4 4" className="size-[4px]" stroke="currentColor"><path d="M0 0l4 4M4 0L0 4" /></svg></button>
            </div>
          </div>
          <MainToolbar />
          <DrawingToolbar />
          <main className="relative bg-white">
            <Chart />
            <p className="absolute left-[4px] top-[2px] flex items-center gap-[3px] whitespace-pre font-['DejaVu_Sans_Condensed','DejaVu_Sans',sans-serif] text-[6px] leading-[9px] text-black">
              <svg viewBox="0 0 4 3" className="h-[3px] w-[5px]"><path d="M0 3h4L2 .5z" /></svg>
              {"USDJPY#,M30  161.585 161.616 161.584 161.602"}
            </p>
            <TradePanel />
          </main>
          <div className="flex h-[13px] overflow-hidden border-t border-[#808080] bg-[#f0f0f0] text-[11px] text-[#777]">
            {tabs.map(([t, w], i) => (
              <button
                key={i}
                className={
                  (i === 2
                    ? "h-[12px] overflow-hidden whitespace-nowrap border border-t-0 border-[#444] bg-white pt-[2px] leading-[15px] text-[#222] "
                    : "relative h-[12px] overflow-hidden whitespace-nowrap pt-[2px] leading-[15px] ") + w
                }
              >
                {t}
                {i !== 1 && i !== 2 && <span className="absolute right-0 top-[2px] h-[8px] w-px bg-[#888]" />}
              </button>
            ))}
            <div className="ml-auto flex gap-[7px] pr-px pt-px text-[7px] leading-none">
              <button aria-label="Scroll left" className="leading-none">◂</button>
              <button aria-label="Scroll right" className="leading-none">▸</button>
            </div>
          </div>
          <div className="grid h-[12px] grid-cols-[511px_115px_101px_69px_68px_65px_68px_65px_1fr] overflow-hidden border-t border-[#fafafa] bg-[#f0f0f0] text-[11px] leading-[19px] text-[#1a1a1a]">
            <span className="whitespace-nowrap pl-[1px] text-[10px] [font-feature-settings:'palt']">F1キーでヘルプが表示されます</span>
            <span className="border-l border-[#bbb] pl-[6px]">5 通貨</span>
            <span className="border-l border-[#bbb]" />
            <span className="border-l border-[#bbb]" />
            <span className="border-l border-[#bbb]" />
            <span className="border-l border-[#bbb]" />
            <span className="border-l border-[#bbb]" />
            <span className="border-l border-[#bbb]" />
            <span className="flex gap-[3px] whitespace-nowrap border-l border-[#bbb] pl-[2px]">
              <svg viewBox="0 0 15 9" className="mt-[3px] h-[9px] w-[15px]"><path d="M0 0h15v2L0 7z" fill="#7f9433" /><path d="M0 9V7l15-5v7z" fill="#23587a" /><path d="M2.500 0v9M5.500 0v9M8.500 0v9M11.500 0v9" stroke="#d8e0d0" strokeWidth=".6" /></svg>
              528/4 kb
            </span>
          </div>
        </div>
      </div>
      <Taskbar />
    </div>
  );
}
